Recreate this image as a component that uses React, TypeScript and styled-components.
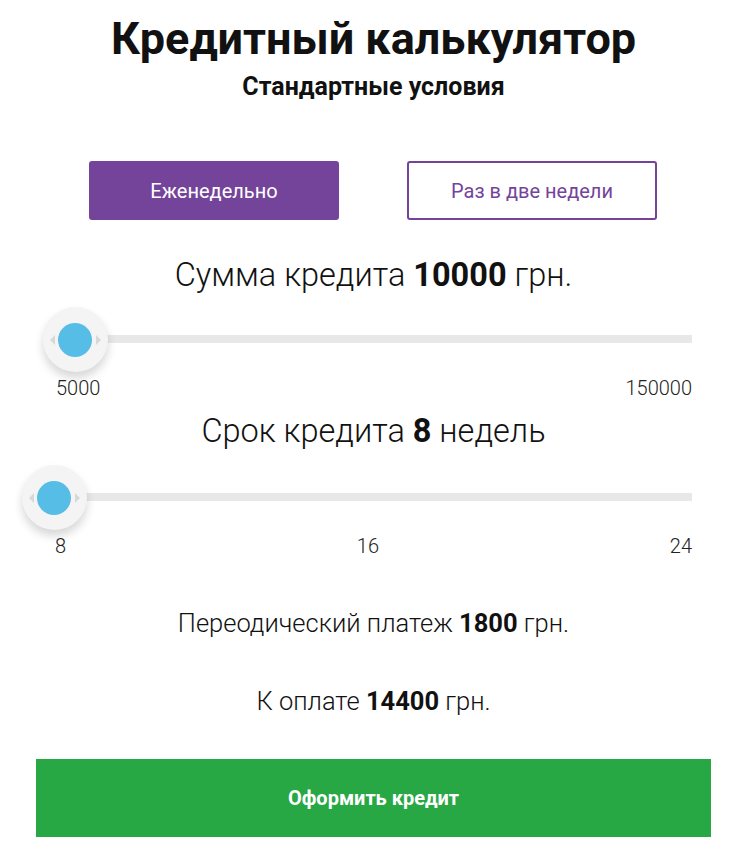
import { useState } from "react";
import styled, { createGlobalStyle } from "styled-components";

const GlobalStyle = createGlobalStyle`
  body {
    margin: 0;
    background: #fff;
    font-family: Roboto, "Noto Sans", sans-serif;
    color: #111;
  }
`;

const Page = styled.div`
  width: 675px;
  margin-left: 36px;
  display: flex;
  flex-direction: column;
  align-items: stretch;
`;

const Title = styled.h1`
  margin: 13px 0 0;
  font-size: 45px;
  line-height: 52px;
  font-weight: 700;
  text-align: center;
  color: #111;
`;

const Subtitle = styled.h2`
  margin: 6.5px 0 0;
  font-size: 25px;
  line-height: 30px;
  font-weight: 700;
  text-align: center;
  color: #111;
`;

const Tabs = styled.div`
  display: flex;
  justify-content: center;
  gap: 68px;
  margin-top: 59.5px;
  padding-right: 1px;
`;

const Tab = styled.button<{ $active?: boolean }>`
  width: 250px;
  height: 59px;
  border-radius: 3px;
  border: 2px solid #74449a;
  background: ${(p) => (p.$active ? "#74449a" : "#fff")};
  color: ${(p) => (p.$active ? "#fff" : "#74449a")};
  font-family: Roboto, sans-serif;
  font-size: 20px;
  font-weight: 400;
  cursor: pointer;
`;

const Heading = styled.div<{ $top: number }>`
  margin-top: ${(p) => p.$top}px;
  font-size: 32.5px;
  line-height: 36px;
  font-weight: 300;
  text-align: center;
  color: #111;

  b {
    font-weight: 700;
  }
`;

const SliderBox = styled.div<{ $top: number }>`
  position: relative;
  width: 656px;
  height: 64px;
  margin-top: ${(p) => p.$top}px;
  display: flex;
  align-items: center;
`;

const Track = styled.div<{ $from: number }>`
  flex: 1;
  height: 8px;
  margin-left: ${(p) => p.$from}px;
  background: #e8e8e8;
`;

const Knob = styled.div`
  position: absolute;
  top: 0;
  width: 65px;
  height: 65px;
  margin-left: -32.5px;
  border-radius: 50%;
  background: #f4f4f4;
  box-shadow: 0 6px 10px rgba(0, 0, 0, 0.16);
  display: flex;
  align-items: center;
  justify-content: center;

  &::before,
  &::after {
    content: "";
    position: absolute;
    top: 27.5px;
    border: 5px solid transparent;
  }
  &::before {
    left: 2px;
    border-right-color: #d8d8d8;
  }
  &::after {
    right: 2px;
    border-left-color: #d8d8d8;
  }
`;

const Dot = styled.div`
  width: 34px;
  height: 34px;
  border-radius: 50%;
  background: #56bde6;
`;

const Scale = styled.div<{ $pad: number }>`
  width: 656px;
  padding-left: ${(p) => p.$pad}px;
  box-sizing: border-box;
  display: flex;
  justify-content: space-between;
  font-size: 20px;
  line-height: 22px;
  font-weight: 300;
  color: #222;
  margin-top: 6px;
`;

const Total = styled.div<{ $top: number }>`
  margin-top: ${(p) => p.$top}px;
  font-size: 25.5px;
  line-height: 30px;
  font-weight: 300;
  text-align: center;
  color: #111;

  b {
    font-weight: 700;
  }
`;

const Submit = styled.button`
  margin-top: 43px;
  height: 78px;
  width: 100%;
  border: none;
  background: #28a745;
  color: #fff;
  font-family: Roboto, sans-serif;
  font-size: 20px;
  font-weight: 700;
  cursor: pointer;
`;

type RangeProps = {
  top: number;
  knobAt: number;
  labels: string[];
  pad: number;
};

function Range({ top, knobAt, labels, pad }: RangeProps) {
  return (
    <>
      <SliderBox $top={top}>
        <Track $from={knobAt} />
        <Knob style={{ left: knobAt }}>
          <Dot />
        </Knob>
      </SliderBox>
      <Scale $pad={pad}>
        {labels.map((l) => (
          <span key={l}>{l}</span>
        ))}
      </Scale>
    </>
  );
}

function App() {
  const [biweekly, setBiweekly] = useState(false);
  const amount = 10000;
  const weeks = 8;
  const payment = 1800;
  const total = 14400;

  return (
    <Page>
      <GlobalStyle />
      <Title>Кредитный калькулятор</Title>
      <Subtitle>Стандартные условия</Subtitle>
      <Tabs>
        <Tab $active={!biweekly} onClick={() => setBiweekly(false)}>
          Еженедельно
        </Tab>
        <Tab $active={biweekly} onClick={() => setBiweekly(true)}>
          Раз в две недели
        </Tab>
      </Tabs>
      <Heading $top={37}>
        Сумма кредита <b>{amount}</b> грн.
      </Heading>
      <Range top={14} knobAt={39} labels={["5000", "150000"]} pad={20} />
      <Heading $top={14}>
        Срок кредита <b>{weeks}</b> недель
      </Heading>
      <Range top={16} knobAt={18} labels={["8", "16", "24"]} pad={19} />
      <Total $top={51}>
        Переодический платеж <b>{payment}</b> грн.
      </Total>
      <Total $top={48}>
        К оплате <b>{total}</b> грн.
      </Total>
      <Submit>Оформить кредит</Submit>
    </Page>
  );
}

export default App;
